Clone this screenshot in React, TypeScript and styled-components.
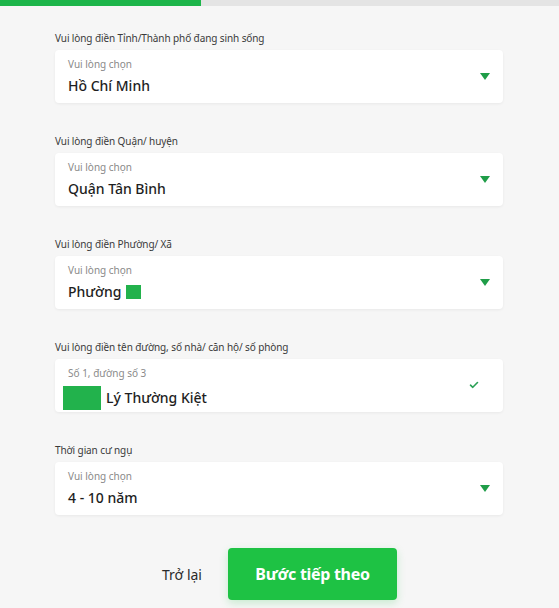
import React from "react"
import styled, { createGlobalStyle } from "styled-components"

const GlobalStyle = createGlobalStyle`
  html, body {
    margin: 0;
    padding: 0;
    background: #f6f6f6;
  }
  body {
    font-family: "Noto Sans", "Liberation Sans", sans-serif;
    color: #222;
  }
`

const Page = styled.div`
  width: 559px;
  min-height: 608px;
  background: #f6f6f6;
`

const Progress = styled.div`
  height: 6px;
  background: #e4e4e4;
`

const ProgressFill = styled.div`
  height: 100%;
  background: #1db54a;
`

const Form = styled.div`
  width: 448px;
  margin-left: 55px;
  padding-top: 25px;
  display: flex;
  flex-direction: column;
`

const Field = styled.div`
  display: flex;
  flex-direction: column;
  gap: 5px;
  margin-bottom: 31px;
`

const Label = styled.div`
  font-size: 10px;
  line-height: 14px;
  color: #3a3a3a;
  letter-spacing: -0.1px;
`

const Card = styled.div`
  height: 53px;
  box-sizing: border-box;
  background: #fff;
  border-radius: 4px;
  box-shadow: 0 1px 3px rgba(0, 0, 0, 0.06);
  padding: 0 12px 0 13px;
  display: flex;
  align-items: center;
`

const CardText = styled.div`
  flex: 1;
  display: flex;
  flex-direction: column;
  align-self: flex-start;
  padding-top: 7px;
`

const Hint = styled.div`
  font-size: 10px;
  line-height: 14px;
  color: #8a8a8a;
`

const Value = styled.div`
  font-size: 14px;
  line-height: 18px;
  margin-top: 6px;
  font-weight: 500;
  color: #1e1e1e;
  display: flex;
  align-items: center;
  gap: 5px;
`

const Redact = styled.span<{ $w: number; $h: number; $shift?: number }>`
  display: inline-block;
  width: ${(p) => p.$w}px;
  height: ${(p) => p.$h}px;
  background: #22b24c;
  margin-left: ${(p) => p.$shift ?? 0}px;
`

const Arrow = styled.span`
  width: 0;
  height: 0;
  border-left: 5px solid transparent;
  border-right: 5px solid transparent;
  border-top: 7px solid #1f9d48;
  margin-right: 1px;
`

const Actions = styled.div`
  display: flex;
  align-items: center;
  justify-content: center;
  gap: 26px;
  margin: 2px 0 0 -55px;
  width: 559px;
`

const BackLink = styled.span`
  font-size: 14px;
  color: #2a2a2a;
`

const NextButton = styled.button`
  width: 169px;
  height: 52px;
  border: none;
  border-radius: 4px;
  background: #1ec244;
  color: #fff;
  font-family: "Noto Sans", "Liberation Sans", sans-serif;
  font-weight: 700;
  font-size: 16px;
  letter-spacing: -0.3px;
  box-shadow: 0 3px 8px rgba(30, 194, 68, 0.22);
`

const CheckIcon = styled.svg`
  margin-right: 12px;
  margin-top: -1px;
`

const Check = () => (
  <CheckIcon width="10" height="8" viewBox="0 0 10 8">
    <path d="M1.5 4.2 L3.8 6.3 L8.5 1.5" fill="none" stroke="#2aa055" strokeWidth="1.6" strokeLinecap="round" strokeLinejoin="round" />
  </CheckIcon>
)

export default function App() {
  return (
    <Page>
      <GlobalStyle />
      <Progress>
        <ProgressFill style={{ width: "36%" }} />
      </Progress>
      <Form>
        <Field>
          <Label>Vui lòng điền Tỉnh/Thành phố đang sinh sống</Label>
          <Card>
            <CardText>
              <Hint>Vui lòng chọn</Hint>
              <Value>Hồ Chí Minh</Value>
            </CardText>
            <Arrow />
          </Card>
        </Field>
        <Field>
          <Label>Vui lòng điền Quận/ huyện</Label>
          <Card>
            <CardText>
              <Hint>Vui lòng chọn</Hint>
              <Value>Quận Tân Bình</Value>
            </CardText>
            <Arrow />
          </Card>
        </Field>
        <Field>
          <Label>Vui lòng điền Phường/ Xã</Label>
          <Card>
            <CardText>
              <Hint>Vui lòng chọn</Hint>
              <Value>
                Phường <Redact $w={15} $h={14} />
              </Value>
            </CardText>
            <Arrow />
          </Card>
        </Field>
        <Field>
          <Label>Vui lòng điền tên đường, số nhà/ căn hộ/ số phòng</Label>
          <Card>
            <CardText>
              <Hint>Số 1, đường số 3</Hint>
              <Value>
                <Redact $w={38} $h={24} $shift={-5} /> Lý Thường Kiệt
              </Value>
            </CardText>
            <Check />
          </Card>
        </Field>
        <Field>
          <Label>Thời gian cư ngụ</Label>
          <Card>
            <CardText>
              <Hint>Vui lòng chọn</Hint>
              <Value>4 - 10 năm</Value>
            </CardText>
            <Arrow />
          </Card>
        </Field>
        <Actions>
          <BackLink>Trở lại</BackLink>
          <NextButton>Bước tiếp theo</NextButton>
        </Actions>
      </Form>
    </Page>
  )
}
